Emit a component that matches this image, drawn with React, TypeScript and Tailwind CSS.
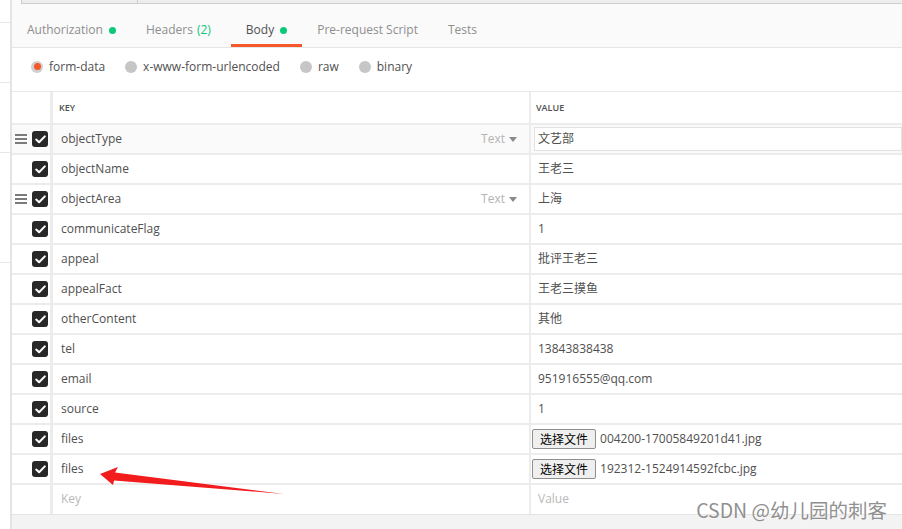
import React from 'react';

type Row = {
  key: string;
  value?: string;
  file?: string;
  handle?: boolean;
  typed?: boolean;
  active?: boolean;
};

const rows: Row[] = [
  { key: 'objectType', value: '文艺部', handle: true, typed: true, active: true },
  { key: 'objectName', value: '王老三' },
  { key: 'objectArea', value: '上海', handle: true, typed: true },
  { key: 'communicateFlag', value: '1' },
  { key: 'appeal', value: '批评王老三' },
  { key: 'appealFact', value: '王老三摸鱼' },
  { key: 'otherContent', value: '其他' },
  { key: 'tel', value: '13843838438' },
  { key: 'email', value: '951916555@qq.com' },
  { key: 'source', value: '1' },
  { key: 'files', file: '004200-17005849201d41.jpg' },
  { key: 'files', file: '192312-1524914592fcbc.jpg' },
];

const font = { fontFamily: '"Open Sans", "Noto Sans CJK SC", sans-serif' };

const Check = () => (
  <span className="flex h-4 w-4 items-center justify-center rounded-[3px] bg-[#282828]">
    <svg width="11" height="9" viewBox="0 0 11 9">
      <path d="M1.2 4.6 L4.1 7.3 L9.8 1.4" fill="none" stroke="#fff" strokeWidth="2" strokeLinecap="round" strokeLinejoin="round" />
    </svg>
  </span>
);

const Handle = () => (
  <span className="flex w-3 flex-col gap-[2px]">
    <span className="h-[2px] bg-[#7b7b7b]" />
    <span className="h-[2px] bg-[#7b7b7b]" />
    <span className="h-[2px] bg-[#7b7b7b]" />
  </span>
);

const Dot = () => <span className="ml-[6px] inline-block h-[7px] w-[7px] rounded-full bg-[#0cc97a]" />;

const App: React.FC = () => {
  const tabs = [
    { label: 'Authorization', dot: true },
    { label: 'Headers', count: '(2)' },
    { label: 'Body', dot: true, active: true },
    { label: 'Pre-request Script' },
    { label: 'Tests' },
  ];
  const modes = ['form-data', 'x-www-form-urlencoded', 'raw', 'binary'];

  return (
    <div className="relative flex h-[529px] w-[902px] overflow-hidden bg-white text-[12px] text-[#505050]" style={font}>
      {/* sidebar edge */}
      <div className="flex w-[12px] shrink-0 flex-col border-r-2 border-[#e4e4e4] bg-white">
        <div className="h-[23px] border-b border-[#e6e6e6]" />
        <div className="h-[60px] border-b border-[#e6e6e6]" />
        <div className="h-[70px] border-b border-[#e6e6e6]" />
        <div className="h-[110px] border-b border-[#e6e6e6]" />
      </div>

      <div className="flex min-w-0 flex-1 flex-col">
        {/* url bar remnant */}
        <div className="h-[5px] bg-[#fafafa] pl-[9px]">
          <div className="flex h-[4px] border-b border-l border-[#cfcfcf] bg-[#ededed]">
            <div className="w-[116px] border-r border-[#cfcfcf]" />
          </div>
        </div>

        {/* tabs */}
        <div className="flex h-[43px] border-b border-[#e6e6e6] bg-[#fafafa]">
          {tabs.map((t) => (
            <div
              key={t.label}
              className={`flex items-center border-b-[3px] pl-[15px] pt-[11px] text-[12px] ${t.count ? 'pr-[20px]' : 'pr-[15px]'} ${
                t.active ? 'border-[#f4582b] text-[#505050]' : 'border-transparent text-[#8e8e8e]'
              }`}
            >
              {t.label}
              {t.count && <span className="ml-[4px] text-[#0cc97a]">{t.count}</span>}
              {t.dot && <Dot />}
            </div>
          ))}
        </div>

        {/* body modes */}
        <div className="flex h-[43px] items-center gap-[20px] pb-[6px] pl-[19px]">
          {modes.map((m, i) => (
            <div key={m} className="flex items-center gap-[6px]">
              {i === 0 ? (
                <span className="flex h-3 w-3 items-center justify-center rounded-full bg-[#cfcfcf]">
                  <span className="h-[7px] w-[7px] rounded-full bg-[#f4582b]" />
                </span>
              ) : (
                <span className="h-3 w-3 rounded-full bg-[#c6c6c6]" />
              )}
              <span className="leading-none">{m}</span>
            </div>
          ))}
        </div>

        {/* table */}
        <div className="border-t border-[#e8e8e8]">
          <div className="flex h-[33px] border-b-2 border-[#ececec]">
            <div className="w-[41px] shrink-0 border-r-[3px] border-[#ececec]" />
            <div className="flex w-[478px] shrink-0 items-center border-r-2 border-[#ececec] pl-[6px] text-[9px] font-semibold text-[#505050]">
              KEY
            </div>
            <div className="flex flex-1 items-center pl-[5px] text-[9px] font-semibold text-[#505050]">VALUE</div>
          </div>

          {rows.map((r, i) => (
            <div key={i} className={`flex h-[30px] border-b-2 border-[#ececec] ${r.active ? 'bg-[#fafafa]' : ''}`}>
              <div className="flex w-[41px] shrink-0 items-center justify-end gap-[5px] border-r-[3px] border-[#ececec] pr-[2px]">
                {r.handle && <Handle />}
                <Check />
              </div>
              <div className="flex w-[478px] shrink-0 items-center justify-between border-r-2 border-[#ececec] pl-[8px] pr-[12px]">
                <span>{r.key}</span>
                {r.typed && (
                  <span className="flex items-center gap-[4px] text-[#b3b3b3]">
                    Text
                    <svg width="8" height="5" viewBox="0 0 8 5">
                      <path d="M0 0 L8 0 L4 5 Z" fill="#8a8a8a" />
                    </svg>
                  </span>
                )}
              </div>
              <div className="flex flex-1 items-center">
                {r.active ? (
                  <div className="ml-[3px] flex h-[24px] flex-1 items-center border border-[#e2e2e2] bg-white pl-[3px]">{r.value}</div>
                ) : r.file ? (
                  <div className="flex items-center pl-[1px]">
                    <span
                      className="flex h-[20px] items-center rounded-[2px] border border-[#8f8f8f] bg-[#efefef] px-[7px] text-[12px] text-black"
                      style={{ fontFamily: '"Noto Sans CJK SC", sans-serif' }}
                    >
                      选择文件
                    </span>
                    <span className="ml-[4px]">{r.file}</span>
                  </div>
                ) : (
                  <span className="pl-[7px]">{r.value}</span>
                )}
              </div>
            </div>
          ))}

          <div className="flex h-[30px] border-b border-[#e4e4e4] text-[#b8b8b8]">
            <div className="w-[41px] shrink-0 border-r-[3px] border-[#ececec]" />
            <div className="flex w-[478px] shrink-0 items-center border-r-2 border-[#ececec] pb-[1px] pl-[8px]">Key</div>
            <div className="flex flex-1 items-center pb-[1px] pl-[7px]">Value</div>
          </div>
        </div>

        <div className="flex-1 bg-[#f3f3f3]" />
      </div>

      {/* annotation arrow */}
      <svg className="pointer-events-none absolute left-0 top-0" width="902" height="529">
        <polygon points="100,474 118,467 115,472.5 284,494 114,480.5 113,485" fill="#f21c1c" />
      </svg>

      {/* watermark */}
      <div
        className="pointer-events-none absolute bottom-[10px] right-[15px] text-[19.5px] leading-none text-[#909090]"
        style={{ fontFamily: '"Noto Sans CJK SC", sans-serif', textShadow: '0 0 2px #fff' }}
      >
        CSDN @幼儿园的刺客
      </div>
    </div>
  );
};

export default App;
